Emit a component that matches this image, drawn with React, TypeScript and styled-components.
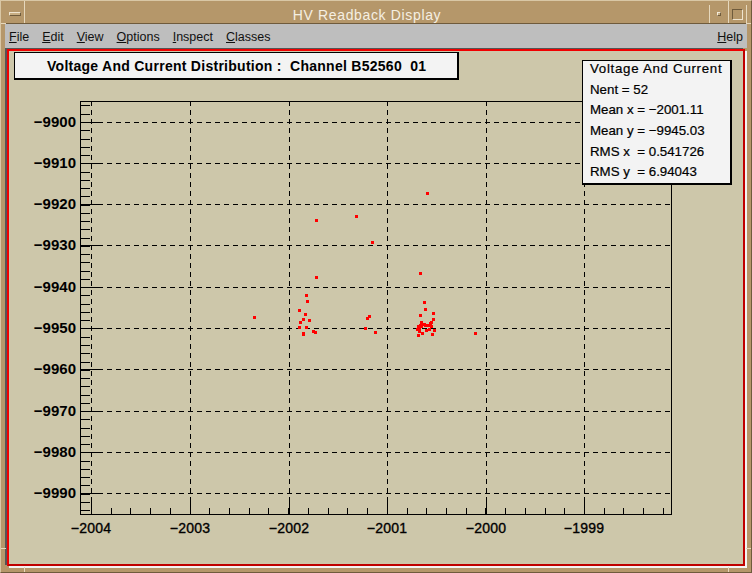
import React, { FC } from "react"
import styled, { createGlobalStyle } from "styled-components"

const GlobalStyle = createGlobalStyle`
  html, body {
    margin: 0;
    padding: 0;
    background: #b5976a;
  }
`

const Window = styled.div`
  position: relative;
  box-sizing: border-box;
  width: 752px;
  height: 573px;
  display: flex;
  flex-direction: column;
  padding: 4px;
  background: #b5976a;
  border-top: 1px solid #d9c7a5;
  border-left: 1px solid #d9c7a5;
  border-right: 1px solid #6f5b3c;
  border-bottom: 1px solid #6f5b3c;
  font-family: "Liberation Sans", Arial, sans-serif;
  overflow: hidden;
`

const TitleBar = styled.div`
  box-sizing: border-box;
  display: flex;
  height: 19px;
  flex: none;
  border-bottom: 1px solid #6f5b3c;
`

const FrameButton = styled.div<{ $width: number }>`
  box-sizing: border-box;
  width: ${(p) => p.$width}px;
  flex: none;
  display: flex;
  align-items: center;
  justify-content: center;
  border-right: 1px solid #e6d8bd;
`

const MenuGlyph = styled.span`
  display: block;
  box-sizing: border-box;
  width: 12px;
  height: 4px;
  background: #c8ae83;
  border: 1px solid #6f5b3c;
  border-top-color: #efe4cf;
  border-left-color: #efe4cf;
`

const MinGlyph = styled.span`
  display: block;
  box-sizing: border-box;
  width: 4px;
  height: 4px;
  background: #c8ae83;
  border: 1px solid #f3ead9;
  border-right-color: #6f5b3c;
  border-bottom-color: #6f5b3c;
`

const MaxGlyph = styled.span`
  display: block;
  box-sizing: border-box;
  width: 11px;
  height: 11px;
  border: 1px solid #6f5b3c;
  border-right-color: #efe4cf;
  border-bottom-color: #efe4cf;
`

const WindowTitle = styled.div`
  flex: 1;
  text-align: center;
  color: #f5efe2;
  font-size: 14px;
  line-height: 20px;
  letter-spacing: 0.65px;
  border-right: 1px solid #e6d8bd;
`

const MenuBar = styled.div`
  box-sizing: border-box;
  flex: none;
  height: 24px;
  display: flex;
  align-items: center;
  gap: 13px;
  padding: 1px 4px 0 4px;
  background: #bebebe;
  color: #111;
  font-size: 12.5px;
`

const MenuItem = styled.span<{ $right?: boolean }>`
  margin-left: ${(p) => (p.$right ? "auto" : "0")};
  &::first-letter {
    text-decoration: underline;
  }
`

const Canvas = styled.div`
  position: relative;
  flex: 1;
  min-height: 0;
  background: #cdc7aa;
  border: 2px solid #f00000;
  border-right-color: #c00000;
  border-bottom-color: #c00000;
  margin: 1px 2px 2px 2px;
  box-shadow: 2px 2px 0 #f4f4f4, -2px -1px 0 #555;
`

const PlotTitle = styled.div`
  position: absolute;
  left: 5px;
  top: 1px;
  box-sizing: border-box;
  width: 445px;
  height: 28px;
  padding-left: 32px;
  background: #f3f3f3;
  border: 1px solid #000;
  border-right-width: 2px;
  border-bottom-width: 2px;
  color: #000;
  font-size: 14px;
  font-weight: bold;
  line-height: 27px;
  white-space: pre;
  letter-spacing: 0.27px;
`

const StatsBox = styled.div`
  position: absolute;
  left: 573px;
  top: 9px;
  box-sizing: border-box;
  width: 150px;
  height: 125px;
  padding: 0 0 0 7px;
  background: #f3f3f3;
  border: 1px solid #000;
  border-right-width: 2px;
  border-bottom-width: 2px;
  color: #000;
`

const StatsRow = styled.div<{ $title?: boolean }>`
  height: 20.7px;
  line-height: 16px;
  font-size: 13.3px;
  white-space: pre;
  letter-spacing: ${(p) => (p.$title ? "0.7px" : "0")};
  -webkit-text-stroke: 0.2px #000;
`

const PlotSvg = styled.svg`
  display: block;
  width: 100%;
  height: 100%;
`

const AxisLabel = styled.text`
  font-family: "Liberation Sans", Arial, sans-serif;
  font-size: 15px;
  font-weight: bold;
  fill: #000;
`

const XLabel = styled(AxisLabel)`
  font-size: 14px;
  font-weight: normal;
  letter-spacing: 0.2px;
  stroke: #000;
  stroke-width: 0.35px;
`

type Side = "top" | "bottom" | "left" | "right"

const Tick = styled.span<{ $side: Side; $at: number }>`
  position: absolute;
  background: #e6d8bd;
  ${(p) =>
    p.$side === "top" || p.$side === "bottom"
      ? `width: 1px; height: 5px; ${p.$side}: 0; left: ${p.$at}px;`
      : `width: 5px; height: 1px; ${p.$side}: 0; top: ${p.$at}px;`}
`

const PLOT = { left: 80, right: 671, top: 101, bottom: 514 }
const X_MAJORS = [91, 190, 289, 387, 486, 584]
const Y_MAJORS = [122, 163, 204, 245, 287, 328, 369, 411, 452, 493]
const X_STEP = 98.6 / 5
const Y_STEP = 41.3 / 5

const xMinor: number[] = []
for (let x = PLOT.left + 11; x < PLOT.right; x += X_STEP) xMinor.push(Math.round(x))
const yMinor: number[] = []
for (let y = 122 - 2 * Y_STEP; y < PLOT.bottom; y += Y_STEP) yMinor.push(Math.round(y))

const POINTS: [number, number][] = [
  [316, 220], [356, 216], [372, 242], [316, 277], [306, 295], [307, 301],
  [299, 310], [305, 314], [303, 319], [309, 320], [300, 322], [299, 327],
  [306, 327], [313, 331], [315, 332], [303, 333], [303, 334], [254, 317],
  [369, 316], [367, 318], [365, 328], [375, 332], [427, 193], [420, 273],
  [424, 302], [425, 309], [420, 315], [433, 313], [433, 319], [431, 322],
  [430, 323], [421, 322], [420, 325], [418, 326], [417, 329], [421, 326],
  [424, 324], [427, 325], [430, 325], [426, 330], [429, 329], [434, 330],
  [422, 333], [432, 334], [418, 335], [475, 333], [423, 324], [425, 325],
  [419, 328], [428, 325], [431, 326], [419, 331],
]

const X_LABELS = ["\u22122004", "\u22122003", "\u22122002", "\u22122001", "\u22122000", "\u22121999"]
const Y_LABELS = [9900, 9910, 9920, 9930, 9940, 9950, 9960, 9970, 9980, 9990]

const STATS = [
  "Voltage And Current",
  "Nent = 52",
  "Mean x = \u22122001.11",
  "Mean y = \u22129945.03",
  "RMS x  = 0.541726",
  "RMS y  = 6.94043",
]

const MENUS = ["File", "Edit", "View", "Options", "Inspect", "Classes"]

const Plot: FC = () => (
  <PlotSvg viewBox="9 51 734 513" shapeRendering="crispEdges">
    {X_MAJORS.map((x) => (
      <g key={x} stroke="#000">
        <line x1={x + 0.5} x2={x + 0.5} y1={PLOT.top} y2={PLOT.bottom} strokeDasharray="5 4" />
        <line x1={x + 0.5} x2={x + 0.5} y1={PLOT.bottom} y2={PLOT.bottom - 14} />
      </g>
    ))}
    {Y_MAJORS.map((y) => (
      <g key={y} stroke="#000">
        <line x1={PLOT.left} x2={PLOT.right} y1={y + 0.5} y2={y + 0.5} strokeDasharray="5 4" />
        <line x1={PLOT.left} x2={PLOT.left + 19} y1={y + 0.5} y2={y + 0.5} />
      </g>
    ))}
    {xMinor.map((x) => (
      <line key={x} x1={x + 0.5} x2={x + 0.5} y1={PLOT.bottom} y2={PLOT.bottom - 6} stroke="#000" />
    ))}
    {yMinor.map((y) => (
      <line key={y} x1={PLOT.left} x2={PLOT.left + 10} y1={y + 0.5} y2={y + 0.5} stroke="#000" />
    ))}
    <rect
      x={PLOT.left + 0.5}
      y={PLOT.top + 0.5}
      width={PLOT.right - PLOT.left}
      height={PLOT.bottom - PLOT.top}
      fill="none"
      stroke="#000"
    />
    {POINTS.map(([x, y], i) => (
      <rect key={i} x={x - 1} y={y - 1} width={3} height={3} fill="#f00" />
    ))}
    {Y_LABELS.map((v, i) => (
      <AxisLabel key={v} x={76} y={Y_MAJORS[i] + 5} textAnchor="end">
        {`\u2212${v}`}
      </AxisLabel>
    ))}
    {X_LABELS.map((label, i) => (
      <XLabel key={label} x={X_MAJORS[i]} y={533} textAnchor="middle">
        {label}
      </XLabel>
    ))}
  </PlotSvg>
)

const App: FC = () => (
  <>
    <GlobalStyle />
    <Window>
      <TitleBar>
        <FrameButton $width={20}>
          <MenuGlyph />
        </FrameButton>
        <WindowTitle>HV Readback Display</WindowTitle>
        <FrameButton $width={19}>
          <MinGlyph />
        </FrameButton>
        <FrameButton $width={18}>
          <MaxGlyph />
        </FrameButton>
      </TitleBar>
      <MenuBar>
        {MENUS.map((m) => (
          <MenuItem key={m}>{m}</MenuItem>
        ))}
        <MenuItem $right>Help</MenuItem>
      </MenuBar>
      <Canvas>
        <Plot />
        <PlotTitle>{"Voltage And Current Distribution :  Channel B52560  01"}</PlotTitle>
        <StatsBox>
          {STATS.map((s, i) => (
            <StatsRow key={s} $title={i === 0}>
              {s}
            </StatsRow>
          ))}
        </StatsBox>
      </Canvas>
      <Tick $side="top" $at={23} />
      <Tick $side="top" $at={727} />
      <Tick $side="left" $at={22} />
      <Tick $side="right" $at={22} />
      <Tick $side="left" $at={547} />
      <Tick $side="right" $at={547} />
      <Tick $side="bottom" $at={23} />
      <Tick $side="bottom" $at={727} />
    </Window>
  </>
)

export default App
